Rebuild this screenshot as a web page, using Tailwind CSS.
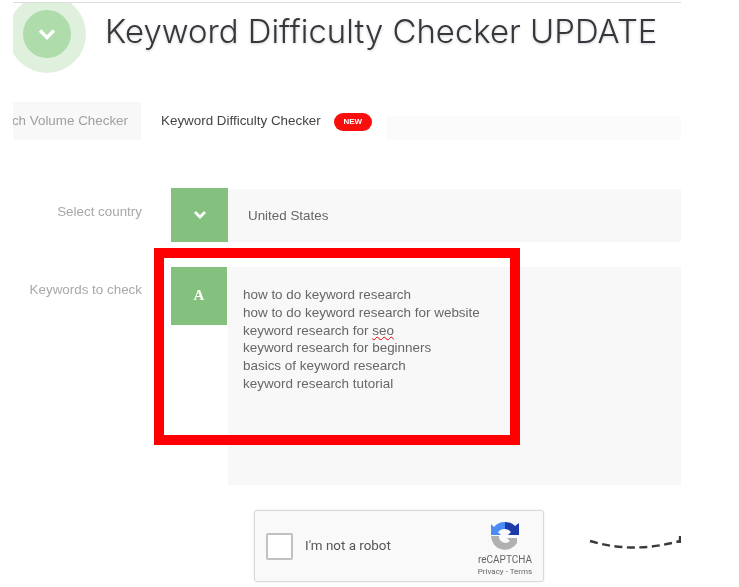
<!DOCTYPE html>
<html lang="en">

<head>
    <meta charset="UTF-8">
    <title>Keyword Difficulty Checker</title>
    <script src="https://cdn.jsdelivr.net/npm/@tailwindcss/browser@4"></script>
</head>

<body class="bg-white font-['Liberation_Sans',Arial,sans-serif]">
    <div class="relative w-[739px] h-[587px] overflow-hidden blur-[0.35px]">
        <div class="ml-[13px] w-[668px] h-[587px] overflow-hidden pt-[2px]">
            <div class="h-px bg-[#dddddd]"></div>

            <!-- header -->
            <div class="flex items-start h-[99px]">
                <div class="w-[92px] shrink-0 overflow-hidden h-[72px]">
                    <div class="-ml-[5px] -mt-[8px] w-[78px] h-[78px] rounded-full bg-[#dff1dd] flex items-center justify-center">
                        <div class="w-[48px] h-[48px] rounded-full bg-[#aedcaa] flex items-center justify-center">
                            <svg width="20" height="13" viewBox="0 0 20 13" fill="none"><path d="M3 2.5 L10 9.5 L17 2.5" stroke="#fff" stroke-width="3.4"/></svg>
                        </div>
                    </div>
                </div>
                <h1 class="font-['Inter',sans-serif] text-[32.9px] leading-[40px] mt-[8px] text-[#34373b] font-light whitespace-nowrap [text-shadow:0_1px_3px_rgba(0,0,0,0.2)]">Keyword Difficulty Checker UPDATE</h1>
            </div>

            <!-- tabs -->
            <div class="flex items-start h-[86px]">
                <div class="w-[128px] h-[38px] bg-[#f8f8f8] overflow-hidden flex justify-end items-center pr-[13px] text-[13.4px] text-[#a0a0a0] whitespace-nowrap shrink-0">Search Volume Checker</div>
                <div class="ml-[20px] h-[38px] flex items-center text-[13.4px] text-[#444444] whitespace-nowrap">Keyword Difficulty Checker</div>
                <span class="ml-[13px] mt-[11px] w-[38px] h-[18px] rounded-full bg-[#f90d0d] text-white text-[8px] font-bold flex items-center justify-center">NEW</span>
                <div class="ml-[14px] mt-[14px] flex-1 h-[24px] bg-[#fbfbfb]"></div>
            </div>

            <!-- country -->
            <div class="flex h-[54px]">
                <div class="w-[129px] text-right text-[13.4px] text-[#a8a8a8] pt-[14px] shrink-0">Select country</div>
                <div class="ml-[29px] w-[57px] bg-[#85c17e] flex items-center justify-center shrink-0">
                    <svg width="14" height="10" viewBox="0 0 14 10" fill="none"><path d="M2 2 L7 7 L12 2" stroke="#fff" stroke-width="2.8"/></svg>
                </div>
                <div class="flex-1 mt-px bg-[#f8f8f8] flex items-center pl-[20px] pt-px text-[13.4px] text-[#666666]">United States</div>
            </div>

            <!-- keywords -->
            <div class="flex h-[218px] mt-[25px]">
                <div class="w-[129px] text-right text-[13.4px] text-[#a8a8a8] pt-[13px] shrink-0">Keywords to check</div>
                <div class="ml-[29px] w-[56px] h-[58px] pb-[2px] bg-[#85c17e] flex items-center justify-center text-white font-['Liberation_Serif',serif] font-bold text-[15px] shrink-0">A</div>
                <div class="ml-px flex-1 bg-[#f8f8f8] pl-[15px] pt-[19px] text-[13.45px] leading-[17.8px] text-[#666666]">
                    <p>how to do keyword research</p>
                    <p>how to do keyword research for website</p>
                    <p>keyword research for <span class="underline decoration-wavy decoration-[#e00000] decoration-1">seo</span></p>
                    <p>keyword research for beginners</p>
                    <p>basics of keyword research</p>
                    <p>keyword research tutorial</p>
                </div>
            </div>

            <!-- captcha -->
            <div class="ml-[241px] mt-[25px] w-[290px] h-[72px] bg-[#f9f9f9] border border-[#d8d8d8] rounded-[3px] shadow-[0_0_3px_rgba(0,0,0,0.08)] flex items-center">
                <div class="ml-[11px] w-[27px] h-[27px] bg-white border-2 border-[#c1c1c1] rounded-[2px] shrink-0"></div>
                <span class="ml-[12px] font-['Roboto',sans-serif] text-[13.4px] text-[#555555] whitespace-nowrap">I'm not a robot</span>
                <div class="ml-auto mr-[10px] mt-[6px] w-[56px] flex flex-col items-center">
                    <svg width="30" height="30" viewBox="0 0 30 30">
                        <path d="M15 1 A14 14 0 0 0 4 6 L1 3 L1 14 L11 14 L8 11 A8 8 0 0 1 15 8 Z" fill="#4c8bf5"/>
                        <path d="M15 1 A14 14 0 0 1 25 5 L29 2 L29 14 L18 14 L21 11 A8 8 0 0 0 15 8 Z" fill="#1c3aa9"/>
                        <path d="M1 15 L9 15 A6.5 6.5 0 0 0 20 20 L17 17 L27 17 L27 22 A14 14 0 0 1 1 15 Z" fill="#b0b0b0"/>
                    </svg>
                    <span class="text-[10px] leading-[13px] mt-[2px] text-[#666666] font-['Roboto',sans-serif]">reCAPTCHA</span>
                    <span class="text-[8px] leading-[11px] text-[#666666] font-['Roboto',sans-serif] whitespace-nowrap">Privacy - Terms</span>
                </div>
            </div>
        </div>

        <!-- red highlight drawn over the form -->
        <div class="absolute left-[154px] top-[248px] w-[366px] h-[197px] border-[10px] border-[#ff0000]"></div>

        <!-- dashed arrow, cut off by the column edge -->
        <svg class="absolute left-[585px] top-[530px]" width="96" height="24" viewBox="0 0 96 24" fill="none">
            <path d="M5 11 Q48 24 95 11" stroke="#3a3a3a" stroke-width="2.4" stroke-dasharray="8 4.5"/>
            <path d="M95 6 L95 13" stroke="#3a3a3a" stroke-width="2.4"/>
        </svg>
    </div>
</body>

</html>
